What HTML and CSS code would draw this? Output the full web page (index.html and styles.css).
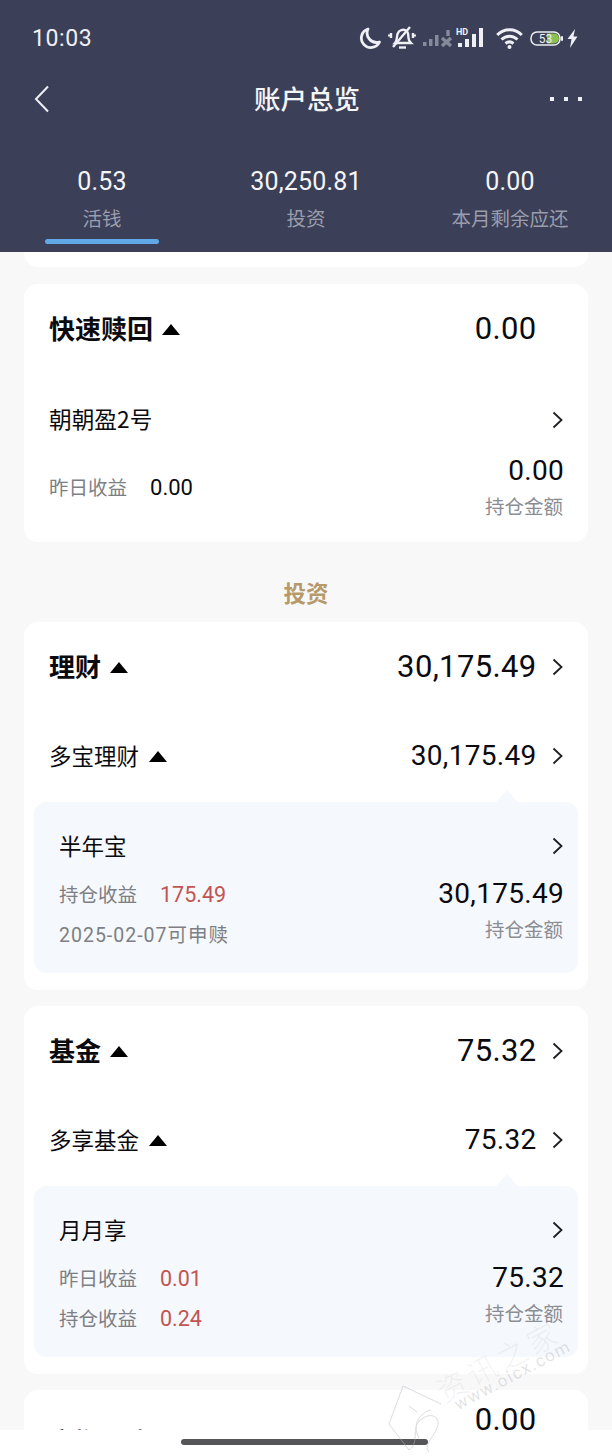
FILE: index.html
```html
<!DOCTYPE html>
<html lang="zh-CN">
<head>
    <meta charset="UTF-8">
    <meta name="viewport" content="width=device-width, initial-scale=1.0">
    <title>账户总览</title>
    <link rel="stylesheet" href="styles.css">
</head>
<body>
    <header class="top">
        <div class="status">
            <span class="clock">10:03</span>
            <div class="status-icons">
                <svg class="ic-moon" width="22" height="22" viewBox="0 0 22 22"><path d="M9 2 A9.5 9.5 0 1 0 20.500 15 A9.500 9.500 0 0 1 9 2 Z" fill="none" stroke="#eef0f4" stroke-width="2.800" stroke-linejoin="round"/></svg>
                <svg class="ic-bell" width="28" height="24" viewBox="0 0 28 24" fill="none" stroke="#eef0f4" stroke-width="2.400"><path d="M7 17 C10 14 8 10 10 7 C11 4 15 3 18 4.500 C21 6.500 20 9 20.500 12 C20.500 14 21.500 15.500 23 17 Z"/><path d="M11 21.500 H18"/><path d="M5 21 L22 1"/><path d="M3 7 V12 M0.800 8.500 V10.500 M25 7 V12 M27.200 8.500 V10.500"/></svg>
                <svg class="ic-signal" width="31" height="20" viewBox="0 0 31 20" fill="#868a9a"><rect x="1" y="14" width="3.500" height="4"/><rect x="7" y="11" width="3.500" height="7"/><rect x="13" y="7" width="3.500" height="11"/><path d="M20 10 L29 18 M29 10 L20 18 M26 2 V8" stroke="#868a9a" stroke-width="3.400"/></svg>
                <svg class="ic-signal" width="32" height="22" viewBox="0 0 32 22" fill="#eef0f4"><text x="0" y="8" class="hd">HD</text><rect x="2" y="16" width="4" height="4"/><rect x="9" y="12" width="4" height="8"/><rect x="16" y="7" width="4" height="13"/><rect x="23" y="1" width="4" height="19"/></svg>
                <svg class="ic-wifi" width="27" height="22" viewBox="0 0 27 22" fill="none" stroke="#eef0f4" stroke-width="3"><path d="M1.200 8 C8 1 19 1 25.800 8"/><path d="M5.500 12.500 C10 8 17 8 21.500 12.500"/><path d="M9.500 16.500 C12 14.500 15 14.500 17.500 16.500"/><circle cx="13.500" cy="20" r="2" fill="#eef0f4" stroke="none"/></svg>
                <svg class="ic-batt" width="34" height="15" viewBox="0 0 34 15"><rect x="1" y="1" width="29" height="13" rx="6" fill="none" stroke="#eef0f4" stroke-width="1.500"/><path d="M17 2.500 H24 A5 5 0 0 1 24 12.500 H17 Z" fill="#8cc152"/><rect x="31" y="5" width="2" height="5" rx="1" fill="#eef0f4"/><text x="15.500" y="12" class="batt-num">53</text></svg>
                <svg class="ic-bolt" width="11" height="19" viewBox="0 0 11 19"><path d="M8 0 L0.500 10 H4.500 L3 19 L10.500 7.500 H6.500 Z" fill="#eef0f4"/></svg>
            </div>
        </div>
        <nav class="nav">
            <svg class="back" width="16" height="28" viewBox="0 0 16 28"><path d="M14 1.500 L2 14 L14 26.500" fill="none" stroke="#eef0f4" stroke-width="2"/></svg>
            <h1 class="nav-title">账户总览</h1>
            <div class="more"><i></i><i></i><i></i></div>
        </nav>
        <div class="tabs">
            <div class="tab tab-on"><b>0.53</b><span>活钱</span></div>
            <div class="tab"><b>30,250.81</b><span>投资</span></div>
            <div class="tab"><b>0.00</b><span>本月剩余应还</span></div>
        </div>
    </header>

    <main class="content">
        <div class="card-tail"></div>

        <section class="card">
            <div class="card-head">
                <h2 class="head-name">快速赎回<i class="tri"></i></h2>
                <span class="num big">0.00</span>
                <span class="chev-gap"></span>
            </div>
            <div class="item-title plain">
                <span>朝朝盈2号</span>
                <svg class="chev" width="11" height="18" viewBox="0 0 11 18"><path d="M1.500 1.500 L9.500 9 L1.500 16.500"/></svg>
            </div>
            <div class="detail detail-plain">
                <div class="detail-left">
                    <p class="line"><span class="lbl">昨日收益</span><span class="val">0.00</span></p>
                </div>
                <div class="detail-right">
                    <span class="num mid">0.00</span>
                    <span class="lbl-right">持仓金额</span>
                </div>
            </div>
        </section>

        <h3 class="section-name">投资</h3>

        <section class="card">
            <div class="card-head">
                <h2 class="head-name">理财<i class="tri"></i></h2>
                <span class="num big">30,175.49</span>
                <svg class="chev" width="11" height="18" viewBox="0 0 11 18"><path d="M1.500 1.500 L9.500 9 L1.500 16.500"/></svg>
            </div>
            <div class="sub-row">
                <span class="sub-name">多宝理财<i class="tri"></i></span>
                <span class="num mid">30,175.49</span>
                <svg class="chev" width="11" height="18" viewBox="0 0 11 18"><path d="M1.500 1.500 L9.500 9 L1.500 16.500"/></svg>
            </div>
            <div class="panel">
                <div class="item-title">
                    <span>半年宝</span>
                    <svg class="chev" width="11" height="18" viewBox="0 0 11 18"><path d="M1.500 1.500 L9.500 9 L1.500 16.500"/></svg>
                </div>
                <div class="detail">
                    <div class="detail-left">
                        <p class="line"><span class="lbl">持仓收益</span><span class="val red">175.49</span></p>
                        <p class="line"><span class="lbl date">2025-02-07可申赎</span></p>
                    </div>
                    <div class="detail-right">
                        <span class="num mid">30,175.49</span>
                        <span class="lbl-right">持仓金额</span>
                    </div>
                </div>
            </div>
        </section>

        <section class="card">
            <div class="card-head">
                <h2 class="head-name">基金<i class="tri"></i></h2>
                <span class="num big">75.32</span>
                <svg class="chev" width="11" height="18" viewBox="0 0 11 18"><path d="M1.500 1.500 L9.500 9 L1.500 16.500"/></svg>
            </div>
            <div class="sub-row">
                <span class="sub-name">多享基金<i class="tri"></i></span>
                <span class="num mid">75.32</span>
                <svg class="chev" width="11" height="18" viewBox="0 0 11 18"><path d="M1.500 1.500 L9.500 9 L1.500 16.500"/></svg>
            </div>
            <div class="panel">
                <div class="item-title">
                    <span>月月享</span>
                    <svg class="chev" width="11" height="18" viewBox="0 0 11 18"><path d="M1.500 1.500 L9.500 9 L1.500 16.500"/></svg>
                </div>
                <div class="detail">
                    <div class="detail-left">
                        <p class="line"><span class="lbl">昨日收益</span><span class="val red">0.01</span></p>
                        <p class="line"><span class="lbl">持仓收益</span><span class="val red">0.24</span></p>
                    </div>
                    <div class="detail-right">
                        <span class="num mid">75.32</span>
                        <span class="lbl-right">持仓金额</span>
                    </div>
                </div>
            </div>
        </section>

        <section class="card">
            <div class="card-head head-last">
                <h2 class="head-name">定期账户</h2>
                <span class="num big">0.00</span>
                <span class="chev-gap"></span>
            </div>
        </section>
    </main>

    <div class="home-bar"><i></i></div>

    <!-- faint watermark that sits over the page corner -->
    <div class="watermark">
        <span class="wm-cn">资讯之家</span>
        <span class="wm-url">www.oicx.com</span>
        <svg class="wm-logo" width="70" height="70" viewBox="0 0 70 70" fill="none" stroke="#b9bcc2" stroke-width="1"><path d="M18 2 L56 20 M18 2 L4 40 L24 66"/><path d="M24 66 C36 58 24 42 38 34 C48 28 56 34 52 44 C48 54 38 62 44 68"/><path d="M34 54 C26 40 36 28 46 26"/><path d="M24 22 L32 28"/></svg>
    </div>
</body>
</html>
```

FILE: styles.css
```css
* {
    box-sizing: border-box;
}
html, body {
    margin: 0;
    height: 1456px;
    overflow: hidden;
}
body {
    position: relative;
    display: flex;
    flex-direction: column;
    background-color: #f8f8f9;
    color: #0b0b0f;
    font-family: "Noto Sans CJK SC", Roboto, sans-serif;
}
h1, h2, h3, p {
    margin: 0;
    font-weight: normal;
}

/* header */
.top {
    flex: none;
    height: 252px;
    background-color: #3b3f57;
    color: #f4f5f7;
}
.status {
    height: 76px;
    display: flex;
    align-items: center;
    padding: 0 34px 0 32px;
}
.clock {
    font-family: Roboto, sans-serif;
    font-size: 23px;
    letter-spacing: 0.6px;
    color: #eef0f4;
}
.status-icons {
    margin-left: auto;
    display: flex;
    align-items: center;
}
.ic-moon { margin-right: 7px; }
.ic-bell { margin-right: 6px; }
.ic-signal { margin-right: 3px; }
.ic-wifi { margin: 0 7px 0 5px; }
.ic-batt { margin-right: 3px; }
.hd {
    font-family: Roboto, sans-serif;
    font-size: 9px;
    font-weight: 700;
}
.batt-num {
    font-family: Roboto, sans-serif;
    font-size: 12px;
    fill: #eef0f4;
    text-anchor: middle;
}
.nav {
    height: 46px;
    display: flex;
    align-items: center;
    justify-content: space-between;
    padding: 0 30px 0 34px;
}
.nav-title {
    font-size: 26.500px;
    font-weight: 500;
    line-height: 46px;
    margin: -2px 0 0 14px;
}
.more {
    display: flex;
    gap: 10px;
}
.more i {
    width: 4px;
    height: 4px;
    background-color: #eef0f4;
}
.tabs {
    display: grid;
    grid-template-columns: 204px 204px 204px;
    padding-top: 40px;
}
.tab {
    height: 90px;
    display: flex;
    flex-direction: column;
    align-items: center;
}
.tab b {
    font-family: Roboto, sans-serif;
    font-size: 25px;
    font-weight: 400;
    line-height: 34px;
    letter-spacing: 0.2px;
    margin-top: 3px;
}
.tab span {
    font-size: 19.500px;
    line-height: 38px;
    color: #9a9dac;
}
.tab-on::after {
    content: "";
    width: 114px;
    height: 5px;
    margin-top: 2px;
    border-radius: 3px;
    background-color: #60a8e6;
}

/* scrolling part */
.content {
    flex: 1;
    overflow: hidden;
}
.card-tail {
    height: 15px;
    margin: 0 24px 17px;
    background-color: #fff;
    border-radius: 0 0 14px 14px;
}
.card {
    margin: 0 24px 16px;
    padding: 0 25px;
    background-color: #fff;
    border-radius: 14px;
}
.card-head {
    height: 90px;
    display: flex;
    align-items: center;
}
.head-name {
    flex: 1;
    font-size: 26px;
    font-weight: 700;
    display: flex;
    align-items: center;
    padding-bottom: 3px;
}
.tri {
    width: 0;
    height: 0;
    margin: 3px 0 0 9px;
    border-left: 9px solid transparent;
    border-right: 9px solid transparent;
    border-bottom: 11px solid #000;
}
.num {
    font-family: Roboto, sans-serif;
}
.big {
    font-size: 31px;
    line-height: 36px;
    letter-spacing: 0.35px;
}
.mid {
    font-size: 28px;
    line-height: 36px;
    letter-spacing: 0.3px;
}
.chev {
    flex: none;
    fill: none;
    stroke: #1c1c22;
    stroke-width: 1.800;
}
.card-head .chev,
.sub-row .chev,
.chev-gap {
    width: 11px;
    margin-left: 15.500px;
}
.sub-row {
    height: 88px;
    display: flex;
    align-items: center;
}
.sub-name {
    flex: 1;
    font-size: 22.500px;
    display: flex;
    align-items: center;
    padding-bottom: 2px;
}
.sub-name .tri {
    margin-left: 10px;
}
.panel {
    position: relative;
    margin: 2px -15px 0;
    padding: 18px 15px 19px 25px;
    background-color: #f5f8fc;
    border-radius: 12px;
}
/* little notch pointing at the row above */
.panel::before {
    content: "";
    position: absolute;
    top: -12px;
    right: 60px;
    border-left: 11px solid transparent;
    border-right: 11px solid transparent;
    border-bottom: 12px solid #f5f8fc;
}
.card:has(.panel) {
    padding-bottom: 17px;
}
.item-title {
    height: 52px;
    display: flex;
    align-items: center;
    justify-content: space-between;
    font-size: 22.500px;
}
.item-title span {
    padding-bottom: 3px;
}
.item-title.plain {
    margin-top: 20px;
    font-size: 22.700px;
}
.detail {
    display: flex;
    justify-content: space-between;
    align-items: flex-start;
    margin-top: 2px;
}
.detail-plain {
    padding-bottom: 17px;
}
.detail-left {
    display: flex;
    flex-direction: column;
}
.detail-plain .detail-left {
    margin-top: 19px;
}
.line {
    height: 40px;
    display: flex;
    align-items: center;
}
.lbl {
    font-size: 19.500px;
    color: #7d7f85;
    padding-bottom: 2px;
}
.date {
    font-family: Roboto, "Noto Sans CJK SC", sans-serif;
    letter-spacing: 1px;
}
.val {
    font-family: Roboto, sans-serif;
    font-size: 22px;
    margin-left: 22px;
}
.detail-plain .val {
    margin-left: 23px;
}
.red {
    color: #c25553;
    font-size: 21.500px;
    margin-left: 23px;
}
.detail-right {
    display: flex;
    flex-direction: column;
    align-items: flex-end;
    padding-top: 2px;
}
.detail-right .num {
    margin-right: -1px;
}
.detail-plain .detail-right {
    padding-top: 5px;
}
.lbl-right {
    font-size: 19.500px;
    line-height: 38px;
    margin-top: -2px;
    color: #8b8d93;
}
.section-name {
    height: 80px;
    margin-top: -16px;
    padding-top: 30px;
    line-height: 40px;
    text-align: center;
    font-size: 22.500px;
    font-weight: 700;
    color: #b79a6a;
}
.head-last {
    align-items: flex-start;
}
.head-last .head-name {
    margin-top: 32px;
}
.head-last .big {
    margin-top: 12px;
}

/* bottom */
.home-bar {
    flex: none;
    height: 26px;
    background-color: #fff;
    display: flex;
    justify-content: center;
    padding-top: 9px;
}
.home-bar i {
    width: 247px;
    height: 6px;
    margin-right: 3px;
    border-radius: 3px;
    background-color: #555558;
}
.watermark {
    position: absolute;
    left: 380px;
    top: 1310px;
    width: 232px;
    height: 146px;
    pointer-events: none;
}
.wm-cn {
    position: absolute;
    left: 50px;
    top: 28px;
    font-size: 30px;
    font-weight: 300;
    letter-spacing: 4px;
    white-space: nowrap;
    color: rgba(150, 152, 160, 0.12);
    transform: rotate(-28deg);
}
.wm-url {
    position: absolute;
    left: 68px;
    top: 55px;
    font-family: Roboto, sans-serif;
    font-size: 17px;
    letter-spacing: 1.500px;
    white-space: nowrap;
    color: rgba(140, 142, 150, 0.25);
    transform: rotate(-28deg);
}
.wm-logo {
    position: absolute;
    left: 5px;
    top: 74px;
    opacity: 0.5;
}
```
